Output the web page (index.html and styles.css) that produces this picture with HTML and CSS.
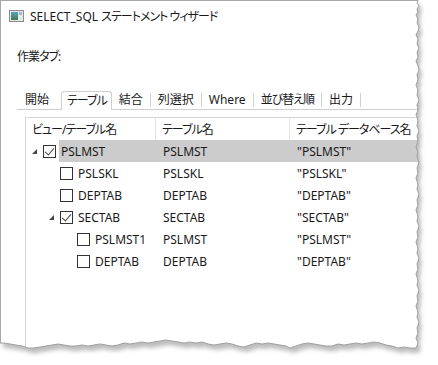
FILE: index.html
```html
<!DOCTYPE html>
<html>
<head>
    <title>SELECT_SQL ステートメント ウィザード</title>
    <meta charset="utf-8">
    <link rel="stylesheet" href="styles.css">
</head>
<body>
    <div class="window">
        <div class="titlebar">
            <svg class="app-icon" width="15" height="12" viewBox="0 0 15 12">
                <defs>
                    <linearGradient id="pane" x1="0" y1="0" x2="0" y2="1">
                        <stop offset="0" stop-color="#5f9fb8"/>
                        <stop offset="1" stop-color="#3f7a52"/>
                    </linearGradient>
                </defs>
                <rect x="0.5" y="0.5" width="14" height="11" fill="#e8e8e8" stroke="#8a8a8a"/>
                <rect x="2" y="2" width="7" height="8" fill="url(#pane)"/>
                <rect x="10" y="2" width="3" height="3" fill="#9fb8c8"/>
            </svg>
            <span>SELECT_SQL <span class="jp">ステートメント ウィザード</span></span>
        </div>

        <div class="section-label"><span class="jp">作業タブ:</span></div>

        <div class="tabs">
            <div class="tab first">開始</div>
            <div class="tab active"><span class="jp">テーブル</span></div>
            <div class="tab">結合</div>
            <div class="sep"></div>
            <div class="tab">列選択</div>
            <div class="sep"></div>
            <div class="tab">Where</div>
            <div class="sep"></div>
            <div class="tab"><span class="jp">並び替え順</span></div>
            <div class="sep"></div>
            <div class="tab">出力</div>
            <div class="sep"></div>
        </div>

        <div class="grid">
            <div class="row header">
                <div class="cell"><span class="jp">ビュー/テーブル名</span></div>
                <div class="cell"><span class="jp">テーブル名</span></div>
                <div class="cell"><span class="jp">テーブル データベース名</span></div>
            </div>

            <div class="row selected">
                <div class="tree level-0">
                    <span class="expander open"></span>
                    <span class="check checked"></span>
                    <span class="name">PSLMST</span>
                </div>
                <div class="cell">PSLMST</div>
                <div class="cell">"PSLMST"</div>
            </div>

            <div class="row">
                <div class="tree level-1">
                    <span class="expander"></span>
                    <span class="check"></span>
                    <span class="name">PSLSKL</span>
                </div>
                <div class="cell">PSLSKL</div>
                <div class="cell">"PSLSKL"</div>
            </div>

            <div class="row">
                <div class="tree level-1">
                    <span class="expander"></span>
                    <span class="check"></span>
                    <span class="name">DEPTAB</span>
                </div>
                <div class="cell">DEPTAB</div>
                <div class="cell">"DEPTAB"</div>
            </div>

            <div class="row">
                <div class="tree level-1">
                    <span class="expander open"></span>
                    <span class="check checked"></span>
                    <span class="name">SECTAB</span>
                </div>
                <div class="cell">SECTAB</div>
                <div class="cell">"SECTAB"</div>
            </div>

            <div class="row">
                <div class="tree level-2">
                    <span class="expander"></span>
                    <span class="check"></span>
                    <span class="name">PSLMST1</span>
                </div>
                <div class="cell">PSLMST</div>
                <div class="cell">"PSLMST"</div>
            </div>

            <div class="row">
                <div class="tree level-2">
                    <span class="expander"></span>
                    <span class="check"></span>
                    <span class="name">DEPTAB</span>
                </div>
                <div class="cell">DEPTAB</div>
                <div class="cell">"DEPTAB"</div>
            </div>
        </div>
    </div>

    <!-- torn paper edge over the right and bottom of the screenshot -->
    <svg class="torn" width="438" height="365" viewBox="0 0 438 365">
        <defs>
            <filter id="soft" x="-10%" y="-10%" width="120%" height="120%">
                <feGaussianBlur stdDeviation="2.2"/>
            </filter>
            <clipPath id="outside">
                <path clip-rule="evenodd" d="M0 0H438V365H0Z M0 0 L418 0 L417 3 L419 6 L417 9 L418 12 L416 15 L418 19 L417 23 L419 27 L418 31 L416 35 L418 39 L417 44 L419 48 L417 52 L418 57 L416 61 L418 66 L419 70 L417 75 L418 80 L416 85 L418 90 L417 95 L419 100 L417 105 L418 110 L416 115 L418 120 L417 126 L419 131 L417 136 L418 141 L416 147 L418 152 L417 157 L419 162 L417 168 L418 173 L416 178 L418 184 L417 189 L419 194 L417 200 L418 205 L416 210 L418 216 L417 221 L419 226 L417 232 L418 237 L416 242 L418 248 L417 253 L419 258 L417 264 L418 269 L416 274 L418 280 L417 285 L419 290 L417 296 L418 301 L416 306 L418 312 L417 317 L419 322 L417 328 L418 333 L416 338 L418 343 L416 348 L410 348 L404 347 L398 348 L392 346 L386 345 L380 343 L374 342 L368 343 L362 344 L356 343 L350 344 L344 345 L338 344 L332 346 L326 346 L320 345 L314 344 L308 343 L302 344 L296 346 L290 348 L286 346 L280 345 L274 344 L268 343 L262 344 L256 343 L250 345 L244 347 L238 346 L232 344 L226 343 L220 344 L214 345 L208 344 L202 342 L196 343 L190 342 L184 343 L178 342 L172 341 L166 340 L160 341 L154 342 L148 343 L142 342 L136 343 L130 344 L124 343 L118 345 L112 346 L106 345 L100 344 L94 345 L88 346 L82 345 L76 346 L70 346 L64 345 L58 344 L52 345 L46 346 L40 347 L34 348 L28 348 L22 346 L16 345 L10 344 L4 343 L0 343 Z"/>
            </clipPath>
        </defs>
        <path fill="#fff" fill-rule="evenodd" d="M0 0H438V365H0Z M0 0 L418 0 L417 3 L419 6 L417 9 L418 12 L416 15 L418 19 L417 23 L419 27 L418 31 L416 35 L418 39 L417 44 L419 48 L417 52 L418 57 L416 61 L418 66 L419 70 L417 75 L418 80 L416 85 L418 90 L417 95 L419 100 L417 105 L418 110 L416 115 L418 120 L417 126 L419 131 L417 136 L418 141 L416 147 L418 152 L417 157 L419 162 L417 168 L418 173 L416 178 L418 184 L417 189 L419 194 L417 200 L418 205 L416 210 L418 216 L417 221 L419 226 L417 232 L418 237 L416 242 L418 248 L417 253 L419 258 L417 264 L418 269 L416 274 L418 280 L417 285 L419 290 L417 296 L418 301 L416 306 L418 312 L417 317 L419 322 L417 328 L418 333 L416 338 L418 343 L416 348 L410 348 L404 347 L398 348 L392 346 L386 345 L380 343 L374 342 L368 343 L362 344 L356 343 L350 344 L344 345 L338 344 L332 346 L326 346 L320 345 L314 344 L308 343 L302 344 L296 346 L290 348 L286 346 L280 345 L274 344 L268 343 L262 344 L256 343 L250 345 L244 347 L238 346 L232 344 L226 343 L220 344 L214 345 L208 344 L202 342 L196 343 L190 342 L184 343 L178 342 L172 341 L166 340 L160 341 L154 342 L148 343 L142 342 L136 343 L130 344 L124 343 L118 345 L112 346 L106 345 L100 344 L94 345 L88 346 L82 345 L76 346 L70 346 L64 345 L58 344 L52 345 L46 346 L40 347 L34 348 L28 348 L22 346 L16 345 L10 344 L4 343 L0 343 Z"/>
        <g clip-path="url(#outside)">
            <path class="shadow" filter="url(#soft)" transform="translate(3 5)" d="M0 0 L418 0 L417 3 L419 6 L417 9 L418 12 L416 15 L418 19 L417 23 L419 27 L418 31 L416 35 L418 39 L417 44 L419 48 L417 52 L418 57 L416 61 L418 66 L419 70 L417 75 L418 80 L416 85 L418 90 L417 95 L419 100 L417 105 L418 110 L416 115 L418 120 L417 126 L419 131 L417 136 L418 141 L416 147 L418 152 L417 157 L419 162 L417 168 L418 173 L416 178 L418 184 L417 189 L419 194 L417 200 L418 205 L416 210 L418 216 L417 221 L419 226 L417 232 L418 237 L416 242 L418 248 L417 253 L419 258 L417 264 L418 269 L416 274 L418 280 L417 285 L419 290 L417 296 L418 301 L416 306 L418 312 L417 317 L419 322 L417 328 L418 333 L416 338 L418 343 L416 348 L410 348 L404 347 L398 348 L392 346 L386 345 L380 343 L374 342 L368 343 L362 344 L356 343 L350 344 L344 345 L338 344 L332 346 L326 346 L320 345 L314 344 L308 343 L302 344 L296 346 L290 348 L286 346 L280 345 L274 344 L268 343 L262 344 L256 343 L250 345 L244 347 L238 346 L232 344 L226 343 L220 344 L214 345 L208 344 L202 342 L196 343 L190 342 L184 343 L178 342 L172 341 L166 340 L160 341 L154 342 L148 343 L142 342 L136 343 L130 344 L124 343 L118 345 L112 346 L106 345 L100 344 L94 345 L88 346 L82 345 L76 346 L70 346 L64 345 L58 344 L52 345 L46 346 L40 347 L34 348 L28 348 L22 346 L16 345 L10 344 L4 343 L0 343 Z"/>
        </g>
        <path class="edge" d="M418 0 L417 3 L419 6 L417 9 L418 12 L416 15 L418 19 L417 23 L419 27 L418 31 L416 35 L418 39 L417 44 L419 48 L417 52 L418 57 L416 61 L418 66 L419 70 L417 75 L418 80 L416 85 L418 90 L417 95 L419 100 L417 105 L418 110 L416 115 L418 120 L417 126 L419 131 L417 136 L418 141 L416 147 L418 152 L417 157 L419 162 L417 168 L418 173 L416 178 L418 184 L417 189 L419 194 L417 200 L418 205 L416 210 L418 216 L417 221 L419 226 L417 232 L418 237 L416 242 L418 248 L417 253 L419 258 L417 264 L418 269 L416 274 L418 280 L417 285 L419 290 L417 296 L418 301 L416 306 L418 312 L417 317 L419 322 L417 328 L418 333 L416 338 L418 343 L416 348 L410 348 L404 347 L398 348 L392 346 L386 345 L380 343 L374 342 L368 343 L362 344 L356 343 L350 344 L344 345 L338 344 L332 346 L326 346 L320 345 L314 344 L308 343 L302 344 L296 346 L290 348 L286 346 L280 345 L274 344 L268 343 L262 344 L256 343 L250 345 L244 347 L238 346 L232 344 L226 343 L220 344 L214 345 L208 344 L202 342 L196 343 L190 342 L184 343 L178 342 L172 341 L166 340 L160 341 L154 342 L148 343 L142 342 L136 343 L130 344 L124 343 L118 345 L112 346 L106 345 L100 344 L94 345 L88 346 L82 345 L76 346 L70 346 L64 345 L58 344 L52 345 L46 346 L40 347 L34 348 L28 348 L22 346 L16 345 L10 344 L4 343 L0 343"/>
    </svg>
</body>
</html>
```

FILE: styles.css
```css
* {
    box-sizing: border-box;
    margin: 0;
    padding: 0;
}

body {
    position: relative;
    width: 438px;
    height: 365px;
    overflow: hidden;
    background: #fff;
    color: #1a1a1a;
    font-family: "Noto Sans", "Noto Sans CJK JP", sans-serif;
    font-size: 12px;
    font-feature-settings: "palt";
}

/* kana runs are narrower in the original UI font */
.jp {
    letter-spacing: -1px;
}

.window {
    height: 365px;
    border-left: 1px solid #a8a8a8;
    border-top: 1px solid #a8a8a8;
}

.titlebar {
    height: 30px;
    display: flex;
    align-items: center;
    gap: 6px;
    padding-left: 8px;
}

.app-icon {
    flex: none;
}

.section-label {
    margin-top: 18px;
    padding-left: 16px;
    line-height: 16px;
}

/* tab strip */
.tabs {
    display: flex;
    align-items: flex-end;
    height: 19px;
    margin: 26px 0 0 16px;
    border-bottom: 1px solid #cfcfcf;
}

.tab {
    padding: 0 7px;
    line-height: 18px;
    white-space: nowrap;
}

.tab.first {
    padding: 0 6px 0 8px;
}

.tab.active {
    margin-left: 6px;
    padding: 0 4px 0 5px;
    height: 19px;
    margin-bottom: -1px;
    background: #fff;
    border: 1px solid #cfcfcf;
    border-bottom: none;
    border-radius: 3px 3px 0 0;
}

.sep {
    width: 1px;
    height: 14px;
    margin-bottom: 2px;
    background: #d0d0d0;
}

/* tree grid */
.grid {
    margin: 7px 0 0 24px;
    border-left: 1px solid #d6d6d6;
    border-top: 1px solid #d6d6d6;
    height: 260px;
}

.row {
    display: grid;
    grid-template-columns: 130px 134px 1fr;
    height: 22px;
}

.row .cell {
    display: flex;
    align-items: center;
    padding-left: 6px;
    white-space: nowrap;
}

.header .cell:nth-child(1),
.header .cell:nth-child(2) {
    border-right: 1px solid #e3e3e3;
}

.row:not(.header) .cell:nth-child(2),
.row:not(.header) .cell:nth-child(3) {
    padding-left: 7px;
}

.tree {
    display: flex;
    align-items: center;
    white-space: nowrap;
}

.tree.level-0 { padding-left: 3px; }
.tree.level-1 { padding-left: 20px; }
.tree.level-2 { padding-left: 37px; }

.expander {
    position: relative;
    width: 12px;
    height: 12px;
    flex: none;
}

.expander.open::after {
    content: "";
    position: absolute;
    left: 3px;
    top: 4px;
    border-left: 5px solid transparent;
    border-bottom: 5px solid #454545;
}

.check {
    position: relative;
    width: 13px;
    height: 13px;
    margin-left: 2px;
    flex: none;
    border: 1px solid #333;
    background: #fff;
}

.check.checked::after {
    content: "";
    position: absolute;
    left: 3px;
    top: 0px;
    width: 4px;
    height: 8px;
    border-right: 1.5px solid #444;
    border-bottom: 1.5px solid #444;
    transform: rotate(40deg);
}

.name {
    flex: 1;
    align-self: stretch;
    display: flex;
    align-items: center;
    margin-left: 3px;
    padding-left: 2px;
}

.selected .name,
.selected .cell {
    background: #cccccc;
}

/* torn edge overlay */
.torn {
    position: absolute;
    left: 0;
    top: 0;
    pointer-events: none;
}

.torn .shadow {
    fill: #7a7a7a;
    opacity: 0.5;
}

.torn .edge {
    fill: none;
    stroke: #a0a0a0;
    stroke-width: 1;
}
```
